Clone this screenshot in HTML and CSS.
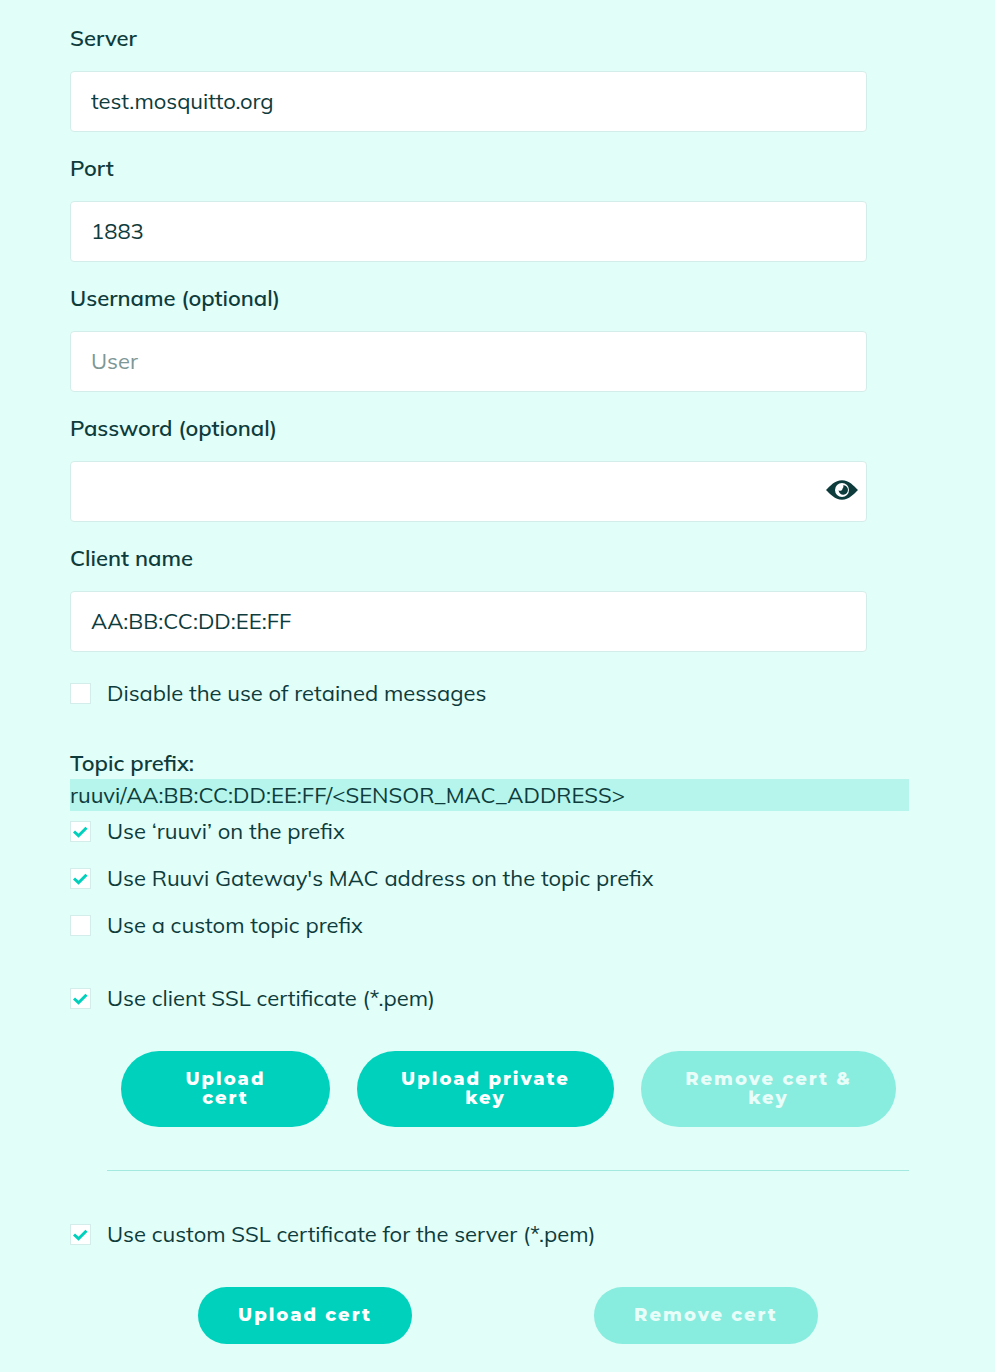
FILE: index.html
```
<!DOCTYPE html>
<html lang="en">
<head>
<meta charset="utf-8">
<title>MQTT settings</title>
<link rel="stylesheet" href="styles.css">
</head>
<body>
<form class="settings">
  <div class="fields">
    <div class="field">
      <label for="server">Server</label>
      <input class="text" id="server" type="text" value="test.mosquitto.org">
    </div>
    <div class="field">
      <label for="port">Port</label>
      <input class="text" id="port" type="text" value="1883">
    </div>
    <div class="field">
      <label for="user">Username (optional)</label>
      <input class="text" id="user" type="text" placeholder="User">
    </div>
    <div class="field">
      <label for="password">Password (optional)</label>
      <div class="password">
        <input class="text" id="password" type="password">
        <button class="reveal" type="button" aria-label="Show password">
          <svg viewBox="0 0 32 20" width="32" height="20" aria-hidden="true">
            <path d="M0 10C4 6 9 .3 16 .3S28 6 32 10C28 14 23 19.7 16 19.7S4 14 0 10Z" fill="#0e3b3c"/>
            <circle cx="16" cy="10" r="7" fill="#fff"/>
            <path d="M17.2 5.3A4.7 4.7 0 1 1 12.6 10.2A2.4 2.4 0 0 0 16.6 8.6A3 3 0 0 0 17.2 5.3Z" fill="#0e3b3c"/>
          </svg>
        </button>
      </div>
    </div>
    <div class="field">
      <label for="client">Client name</label>
      <input class="text" id="client" type="text" value="AA:BB:CC:DD:EE:FF">
    </div>
  </div>

  <label class="check"><input type="checkbox">Disable the use of retained messages</label>

  <section class="topic">
    <h2>Topic prefix:</h2>
    <output class="preview">ruuvi/AA:BB:CC:DD:EE:FF/&lt;SENSOR_MAC_ADDRESS&gt;</output>
    <div class="options">
      <label class="check"><input type="checkbox" checked>Use ‘ruuvi’ on the prefix</label>
      <label class="check"><input type="checkbox" checked>Use Ruuvi Gateway's MAC address on the topic prefix</label>
      <label class="check"><input type="checkbox">Use a custom topic prefix</label>
    </div>
  </section>

  <section class="client-cert">
    <label class="check"><input type="checkbox" checked>Use client SSL certificate (*.pem)</label>
    <div class="actions three">
      <button class="pill" type="button">Upload cert</button>
      <button class="pill" type="button">Upload private key</button>
      <button class="pill" type="button" disabled>Remove cert &amp; key</button>
    </div>
    <hr>
  </section>

  <section>
    <label class="check"><input type="checkbox" checked>Use custom SSL certificate for the server (*.pem)</label>
    <div class="actions">
      <button class="pill" type="button">Upload cert</button>
      <button class="pill" type="button" disabled>Remove cert</button>
    </div>
  </section>
</form>
</body>
</html>
```
FILE: styles.css
```
* { box-sizing: border-box; }

body {
  margin: 0;
  background: #e1fef8;
  color: #0e3b3c;
  font: 400 22px/32px Mulish, Lato, sans-serif;
}

.settings { padding: 24px 86px 28px 70px; }

.fields {
  display: flex;
  flex-direction: column;
  gap: 22px;
  width: 95%;
  margin-bottom: 25px;
}

.field {
  display: flex;
  flex-direction: column;
  gap: 19px;
}

.field > label {
  font-weight: 600;
  line-height: 28px;
}

.text {
  width: 100%;
  height: 61px;
  padding: 0 20px 2px;
  border: 1px solid #d3eeea;
  border-radius: 4px;
  background: #fff;
  color: inherit;
  font: inherit;
}

.text::placeholder { color: #7d9796; opacity: 1; }

.password { position: relative; }

.password .text { display: block; padding-right: 50px; }

.reveal {
  position: absolute;
  top: 19px;
  right: 9px;
  padding: 0;
  border: 0;
  background: none;
  cursor: pointer;
}

.reveal svg { display: block; }

.check {
  display: flex;
  align-items: center;
  gap: 16px;
}

.check input {
  flex: none;
  appearance: none;
  width: 21px;
  height: 21px;
  margin: 0;
  border: 1px solid #d3eeea;
  background: #fff;
}

.check input:checked {
  background: #fff url("data:image/svg+xml,%3Csvg xmlns='http://www.w3.org/2000/svg' viewBox='0 0 19 19'%3E%3Cpath d='M3 9.5 7.5 13.7 15.5 5.7' fill='none' stroke='%2300d1bd' stroke-width='3'/%3E%3C/svg%3E") center / 19px 19px no-repeat;
}

.topic { margin-top: 38px; }

h2 {
  margin: 0;
  font-size: 22px;
  font-weight: 600;
  line-height: 32px;
}

.preview {
  display: block;
  background: #b5f5eb;
}

.options {
  display: flex;
  flex-direction: column;
  gap: 15px;
  margin-top: 4px;
}

.client-cert { margin-top: 41px; }

.actions {
  display: flex;
  justify-content: space-around;
  margin: 37px 0 0 37px;
}

.three {
  display: grid;
  grid-template-columns: 209fr 257fr 255fr;
  gap: 27px;
  padding: 0 13px 0 14px;
}

.pill {
  padding: 19px 40px;
  border: 0;
  border-radius: 38px;
  background: #00d1bd;
  color: #fff;
  font: 800 18px/19px Montserrat, Inter, sans-serif;
  letter-spacing: 2px;
  cursor: pointer;
}

.pill:disabled { background: #88ecdf; color: #e9fdf9; cursor: default; }

hr {
  height: 1px;
  margin: 43px 0 47px 37px;
  border: 0;
  background: #a3e9df;
}
```
